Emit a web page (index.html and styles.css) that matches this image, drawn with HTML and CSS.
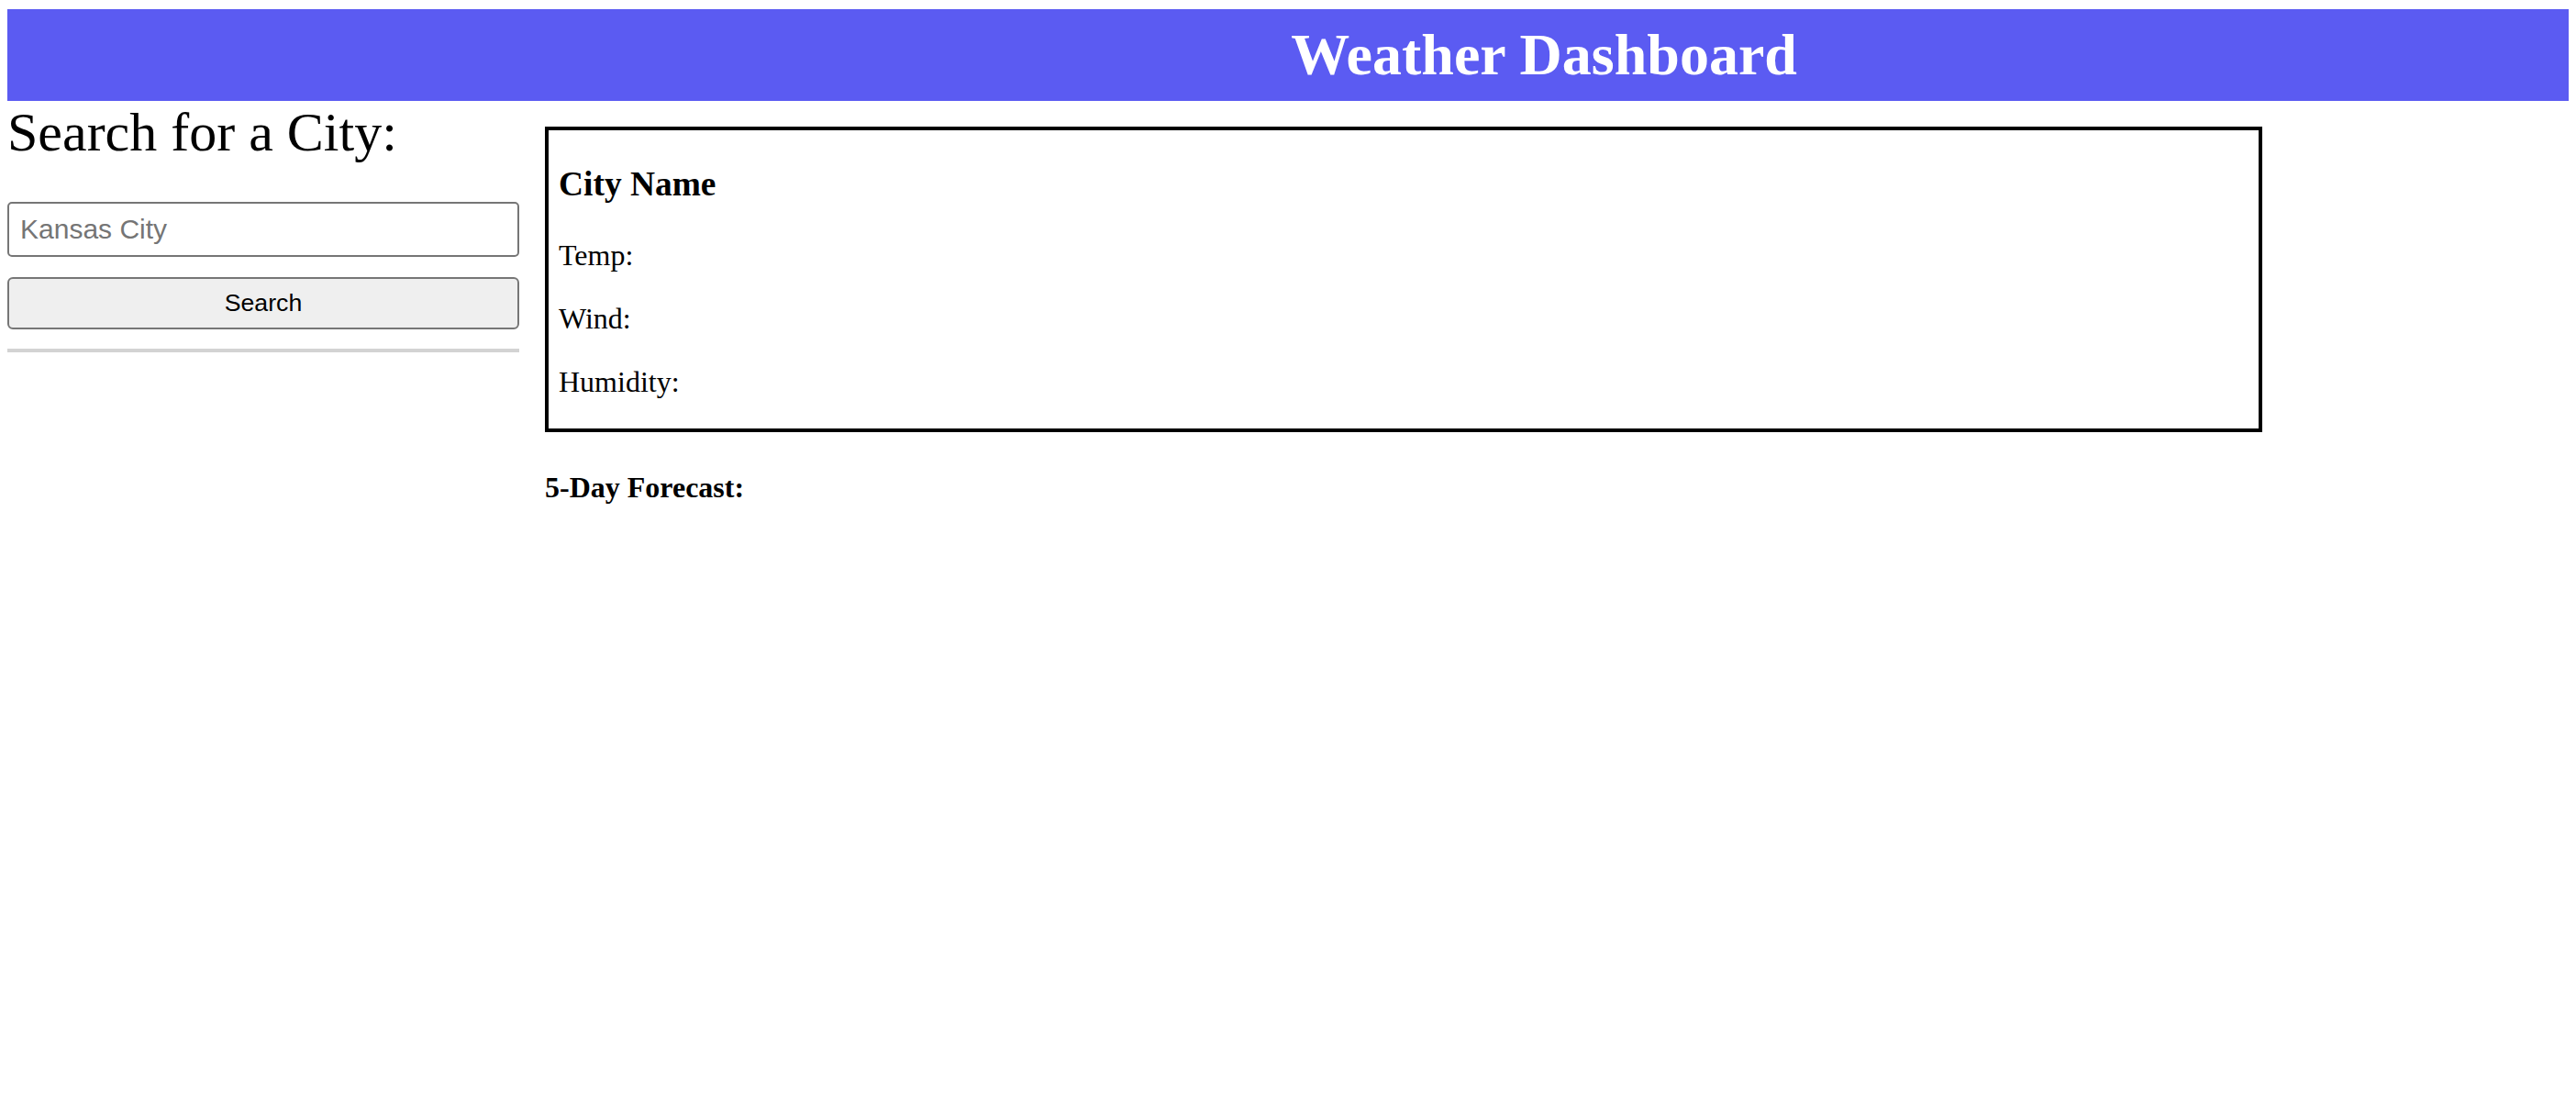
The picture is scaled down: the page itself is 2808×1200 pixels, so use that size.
FILE: index.html
```html
<!DOCTYPE html>
<html lang="en">
<head>
<meta charset="utf-8">
<title>Weather Dashboard</title>
<link rel="stylesheet" href="styles.css">
</head>
<body>
<header class="site-header">
  <div class="header-spacer"></div>
  <h1 class="site-title">Weather Dashboard</h1>
</header>
<div class="layout">
  <aside class="sidebar">
    <h2 class="search-title">Search for a City:</h2>
    <input class="city-input" type="text" placeholder="Kansas City">
    <button class="search-btn" type="button">Search</button>
    <hr class="divider">
  </aside>
  <main class="main">
    <section class="current">
      <h3 class="city-name">City Name</h3>
      <p class="stat">Temp:</p>
      <p class="stat">Wind:</p>
      <p class="stat">Humidity:</p>
    </section>
    <h4 class="forecast-title">5-Day Forecast:</h4>
  </main>
</div>
</body>
</html>
```
FILE: styles.css
```css
html, body {
  background: #ffffff;
}

body {
  margin: 10px 8px 8px;
  font-family: "Liberation Serif", "Times New Roman", serif;
  font-size: 32px;
  color: #000000;
}

.site-header {
  display: grid;
  grid-template-columns: 558px 1fr;
  align-items: center;
  height: 100px;
  background: #5b5bf2;
}

.site-title {
  margin: 0;
  font-size: 64px;
  font-weight: bold;
  color: #ffffff;
  text-align: center;
}

.layout {
  display: grid;
  grid-template-columns: 558px 1872px;
  column-gap: 28px;
  align-items: start;
}

.sidebar {
  display: flex;
  flex-direction: column;
}

.search-title {
  margin: 0 0 41px;
  font-size: 60px;
  font-weight: normal;
  line-height: normal;
}

.city-input {
  box-sizing: border-box;
  height: 60px;
  margin: 0;
  padding: 0 12px;
  border: 2px solid #767676;
  border-radius: 5px;
  font-family: "Liberation Sans", Arial, sans-serif;
  font-size: 30px;
  color: #000000;
}

.city-input::placeholder {
  color: #757575;
}

.search-btn {
  box-sizing: border-box;
  height: 57px;
  margin: 22px 0 0;
  padding: 0;
  border: 2px solid #767676;
  border-radius: 6px;
  background: #efefef;
  font-family: "Liberation Sans", Arial, sans-serif;
  font-size: 26.67px;
  color: #000000;
}

.divider {
  margin: 21px 0 0;
  height: 4px;
  border: 0;
  background: #d3d3d3;
}

.main {
  padding-top: 28px;
}

.current {
  border: 4px solid #000000;
  padding: 0 11px;
}

.city-name {
  font-size: 37.44px;
  margin: 37.44px 0;
}

.stat {
  margin: 32px 0;
}

.forecast-title {
  margin: 42.56px 0;
  font-size: 32px;
}
```
